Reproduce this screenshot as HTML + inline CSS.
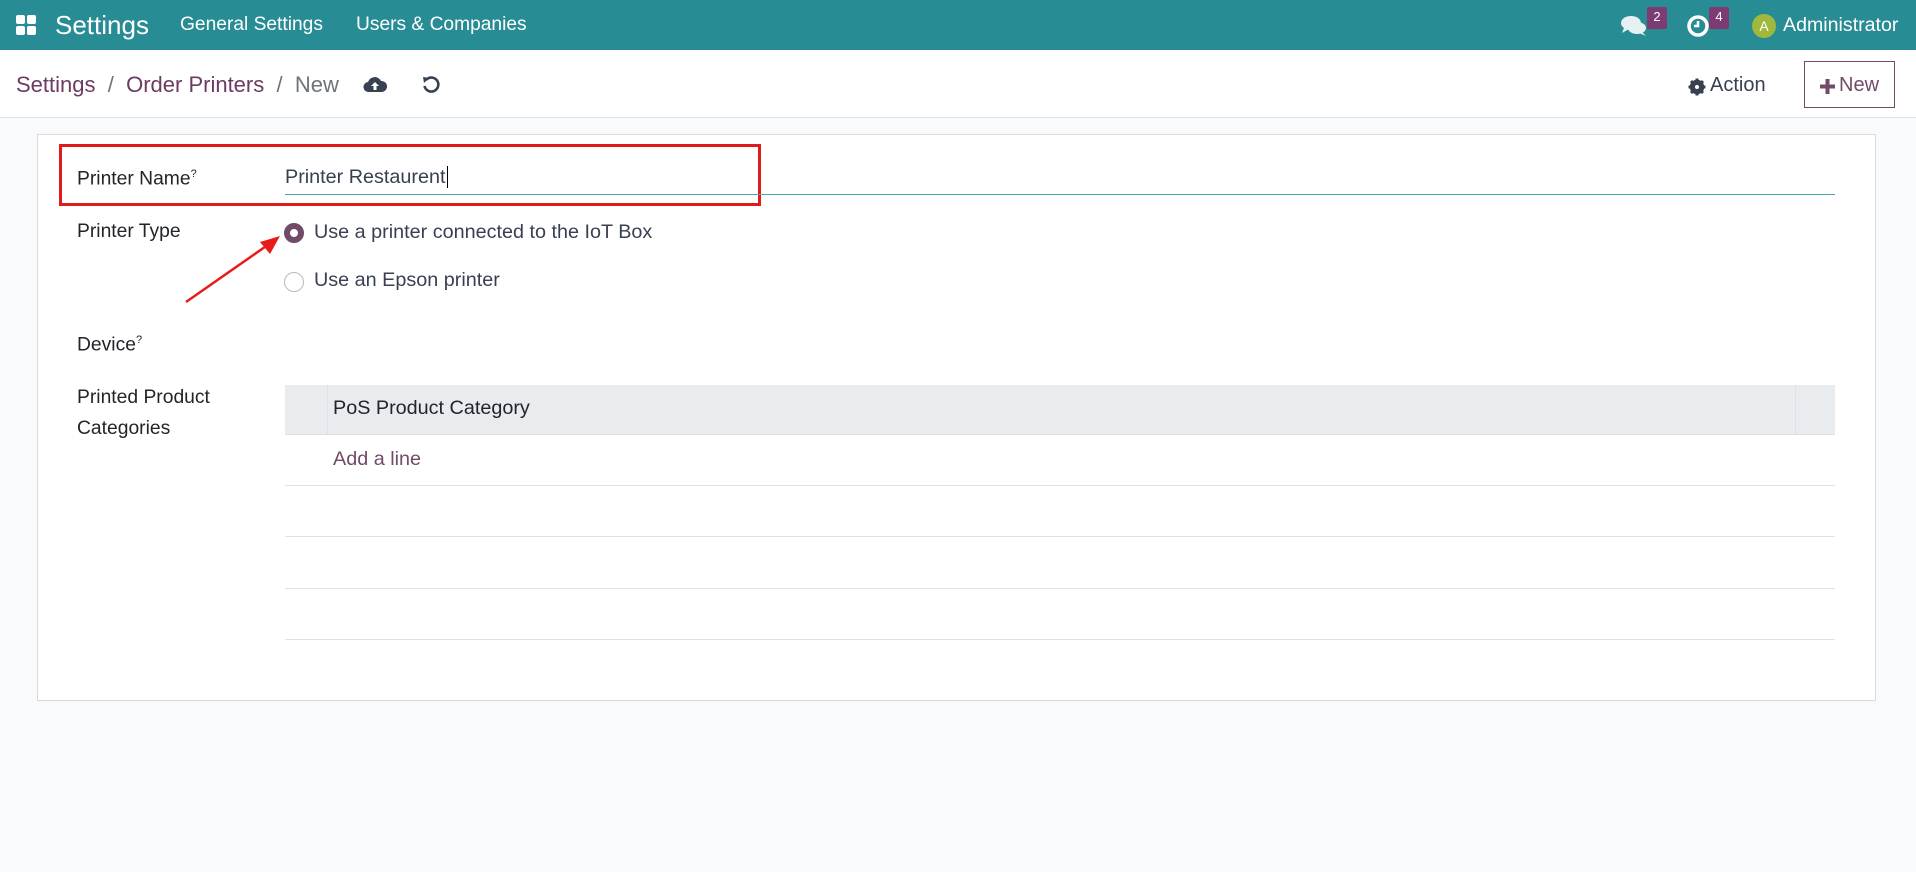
<!DOCTYPE html>
<html><head><meta charset="utf-8"><style>
*{box-sizing:border-box;margin:0;padding:0}
body{width:1916px;height:872px;background:#f9fafb;font-family:"Liberation Sans",sans-serif;color:#374151;position:relative;overflow:hidden}
.a{position:absolute;white-space:nowrap}
.nav{left:0;top:0;width:1916px;height:50px;background:#288c94;color:#fff}
.cp{left:0;top:50px;width:1916px;height:68px;background:#fff;border-bottom:1px solid #dee2e6}
.sheet{left:37px;top:134px;width:1839px;height:567px;background:#fff;border:1px solid #d8dadd}
.lbl{font-size:19.3px;color:#212529}
sup{font-size:11px}
.row{left:285px;width:1550px;border-bottom:1px solid #dee2e6}
.badge{background:#7c3b73;color:#fff;font-size:13px;width:20px;height:22px;text-align:center;line-height:20px;border-radius:2px}
</style></head><body>
<div class="a nav">
  <div class="a" style="left:16px;top:15px;width:9px;height:9px;background:#fff;border-radius:2px"></div>
  <div class="a" style="left:27px;top:15px;width:9px;height:9px;background:#fff;border-radius:2px"></div>
  <div class="a" style="left:16px;top:26px;width:9px;height:9px;background:#fff;border-radius:2px"></div>
  <div class="a" style="left:27px;top:26px;width:9px;height:9px;background:#fff;border-radius:2px"></div>
  <div class="a" style="left:55px;top:10px;font-size:26px">Settings</div>
  <div class="a" style="left:180px;top:14px;font-size:19.2px">General Settings</div>
  <div class="a" style="left:356px;top:14px;font-size:19.2px">Users &amp; Companies</div>
  <svg class="a" style="left:1620px;top:14px" width="28" height="24" viewBox="0 0 28 24"><ellipse cx="11" cy="9" rx="10" ry="7" fill="#e6f1f2"/><path d="M4 14 L2 19 L9 15Z" fill="#e6f1f2"/><ellipse cx="17" cy="14" rx="9" ry="6" fill="#e6f1f2"/><path d="M22 18 L26 22 L19 19Z" fill="#e6f1f2"/></svg>
  <div class="a badge" style="left:1647px;top:7px">2</div>
  <svg class="a" style="left:1686px;top:14px" width="24" height="24" viewBox="0 0 24 24"><circle cx="12" cy="12" r="9" fill="none" stroke="#fff" stroke-width="3.5"/><path d="M12 7V12H8" fill="none" stroke="#fff" stroke-width="2.5"/></svg>
  <div class="a badge" style="left:1709px;top:7px">4</div>
  <div class="a" style="left:1752px;top:14px;width:24px;height:24px;border-radius:50%;background:#a0b83c;font-size:14px;text-align:center;line-height:24px">A</div>
  <div class="a" style="left:1783px;top:14px;font-size:19.6px">Administrator</div>
</div>
<div class="a cp">
  <div class="a" style="left:16px;top:22px;font-size:22px;color:#71639e"><span style="color:#6b3b62">Settings</span> <span style="color:#6c757d">&nbsp;/&nbsp;</span> <span style="color:#6b3b62">Order Printers</span> <span style="color:#6c757d">&nbsp;/&nbsp; New</span></div>
  <svg class="a" style="left:363px;top:25px" width="24" height="18" viewBox="0 0 24 18"><path d="M6 17 A5 5 0 0 1 5 7 A7 7 0 0 1 18 6 A5.5 5.5 0 0 1 19 17Z" fill="#374151"/><path d="M12 7 L8 11H10.5V15H13.5V11H16Z" fill="#fff"/></svg>
  <svg class="a" style="left:421px;top:25px" width="20" height="20" viewBox="0 0 20 20"><path d="M5 5 A7 7 0 1 1 3.5 11" fill="none" stroke="#374151" stroke-width="2.6"/><path d="M2 2 L8 3 L3 8Z" fill="#374151"/></svg>
  <svg class="a" style="left:1688px;top:28px" width="18" height="18" viewBox="0 0 18 18"><circle cx="9" cy="9" r="5.5" fill="none" stroke="#374151" stroke-width="3.5"/><g stroke="#374151" stroke-width="3"><line x1="9" y1="0.5" x2="9" y2="17.5"/><line x1="0.5" y1="9" x2="17.5" y2="9"/><line x1="3" y1="3" x2="15" y2="15"/><line x1="15" y1="3" x2="3" y2="15"/></g><circle cx="9" cy="9" r="2" fill="#fff"/></svg>
  <div class="a" style="left:1710px;top:24px;font-size:20px;color:#374151">Action</div>
  <div class="a" style="left:1804px;top:11px;width:91px;height:47px;border:1px solid #714b67"></div>
  <svg class="a" style="left:1820px;top:29px" width="15" height="15"><rect x="5.5" y="0" width="4" height="15" fill="#714b67"/><rect x="0" y="5.5" width="15" height="4" fill="#714b67"/></svg>
  <div class="a" style="left:1839px;top:24px;font-size:20px;color:#714b67">New</div>
</div>
<div class="a sheet"></div>
<div class="a" style="left:59px;top:144px;width:702px;height:62px;border:3px solid #e01b1b"></div>
<div class="a lbl" style="left:77px;top:168px">Printer Name<sup>?</sup></div>
<div class="a" style="left:285px;top:166px;font-size:19.8px;color:#374151">Printer Restaurent<span style="border-left:1px solid #000;margin-left:1px"></span></div>
<div class="a" style="left:285px;top:194px;width:1550px;height:1px;background:#4aa8ae"></div>
<div class="a lbl" style="left:77px;top:221px">Printer Type</div>
<div class="a" style="left:284px;top:223px;width:20px;height:20px;border-radius:50%;border:6px solid #714b67;background:#fff"></div>
<div class="a" style="left:314px;top:221px;font-size:19.8px">Use a printer connected to the IoT Box</div>
<div class="a" style="left:284px;top:272px;width:20px;height:20px;border-radius:50%;border:1px solid #bbb;background:#fff"></div>
<div class="a" style="left:314px;top:269px;font-size:19.8px">Use an Epson printer</div>
<svg class="a" style="left:180px;top:230px" width="110" height="80"><line x1="6" y1="72" x2="92" y2="12" stroke="#e81b1b" stroke-width="2.5"/><path d="M100 6 L80 12 L90 24Z" fill="#e81b1b"/></svg>
<div class="a lbl" style="left:77px;top:334px">Device<sup>?</sup></div>
<div class="a lbl" style="left:77px;top:387px">Printed Product</div>
<div class="a lbl" style="left:77px;top:418px">Categories</div>
<div class="a" style="left:285px;top:385px;width:1550px;height:50px;background:#e9ecef;border-bottom:1px solid #dee2e6"></div>
<div class="a" style="left:327px;top:385px;width:1px;height:50px;background:#dde0e4"></div>
<div class="a" style="left:1795px;top:385px;width:1px;height:50px;background:#dde0e4"></div>
<div class="a" style="left:333px;top:397px;font-size:19.8px;color:#212529">PoS Product Category</div>
<div class="a" style="left:333px;top:448px;font-size:19.8px;color:#714b67">Add a line</div>
<div class="a row" style="top:485px"></div>
<div class="a row" style="top:536px"></div>
<div class="a row" style="top:588px"></div>
<div class="a row" style="top:639px"></div>
</body></html>
